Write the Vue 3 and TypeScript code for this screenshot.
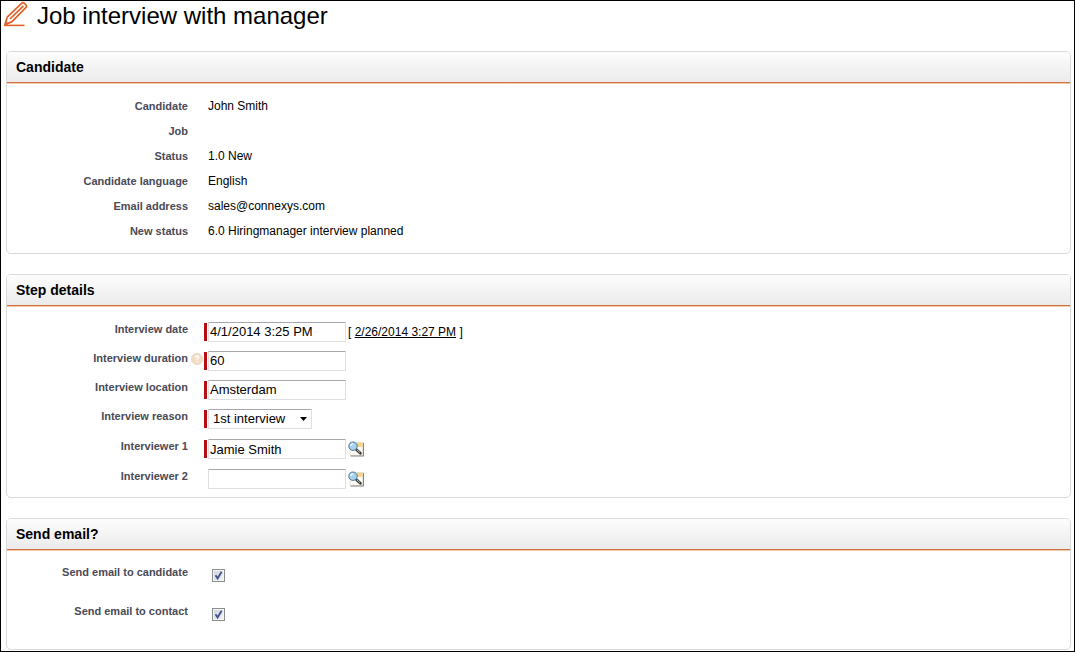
<script setup lang="ts">
import { reactive } from 'vue'

interface Detail {
  label: string
  value: string
}

const details: Detail[] = [
  { label: 'Candidate', value: 'John Smith' },
  { label: 'Job', value: '' },
  { label: 'Status', value: '1.0 New' },
  { label: 'Candidate language', value: 'English' },
  { label: 'Email address', value: 'sales@connexys.com' },
  { label: 'New status', value: '6.0 Hiringmanager interview planned' },
]

const form = reactive({
  date: '4/1/2014 3:25 PM',
  duration: '60',
  location: 'Amsterdam',
  reason: '1st interview',
  mailCandidate: true,
  mailContact: true,
})

const interviewers = reactive([
  { id: 'interviewer-1', label: 'Interviewer 1', name: 'Jamie Smith', required: true },
  { id: 'interviewer-2', label: 'Interviewer 2', name: '', required: false },
])

const now = '2/26/2014 3:27 PM'
</script>

<template>
  <main class="page">
    <header class="title">
      <svg class="pencil" viewBox="0 0 26 26" aria-hidden="true">
        <g fill="none" stroke="#e0622a" stroke-linejoin="round">
          <path d="M3 23.6 L5.2 16.2 L19.8 2.2 Q21 1.2 22.2 2.2 L24 4 Q25 5.2 24 6.4 L10 20.6 Z" stroke-width="1.7" />
          <path d="M8 18 L21.4 4.8" stroke-width="1.7" />
          <path d="M2.5 24.4 H22.5" stroke-width="1.6" />
        </g>
        <path d="M2 25 L3.8 20 L7 22.8 Z" fill="#e0622a" />
      </svg>
      <h1>Job interview with manager</h1>
    </header>

    <section class="panel">
      <h2>Candidate</h2>
      <dl class="body details">
        <div v-for="d in details" :key="d.label" class="row">
          <dt class="label">{{ d.label }}</dt>
          <dd>{{ d.value }}</dd>
        </div>
      </dl>
    </section>

    <section class="panel">
      <h2>Step details</h2>
      <div class="body steps">
        <div class="row">
          <label class="label" for="date">Interview date</label>
          <span class="slot"></span>
          <div class="control">
            <span class="bar required"></span>
            <input id="date" v-model="form.date" class="text" type="text" />
            <span class="now">[ <a href="#" @click.prevent="form.date = now">{{ now }}</a> ]</span>
          </div>
        </div>
        <div class="row">
          <label class="label" for="duration">Interview duration</label>
          <span class="slot">
            <svg class="help" viewBox="0 0 12 12" aria-hidden="true">
              <circle cx="6" cy="6" r="5.5" fill="#f3dcc2" stroke="#e6d6c4" />
              <path d="M4.2 4.7 Q4.3 3 6 3 Q7.8 3.1 7.7 4.5 Q7.6 5.4 6.1 6.1 V7.2 M6.1 8.2 V9.5" fill="none" stroke="#fff" stroke-width="1.3" />
            </svg>
          </span>
          <div class="control">
            <span class="bar required"></span>
            <input id="duration" v-model="form.duration" class="text" type="text" />
          </div>
        </div>
        <div class="row">
          <label class="label" for="location">Interview location</label>
          <span class="slot"></span>
          <div class="control">
            <span class="bar required"></span>
            <input id="location" v-model="form.location" class="text" type="text" />
          </div>
        </div>
        <div class="row tall">
          <label class="label" for="reason">Interview reason</label>
          <span class="slot"></span>
          <div class="control">
            <span class="bar required"></span>
            <span class="pick">
              <select id="reason" v-model="form.reason">
                <option>1st interview</option>
              </select>
              <svg class="arrow" viewBox="0 0 7 4" aria-hidden="true"><path d="M0 0 H7 L3.5 4 Z" /></svg>
            </span>
          </div>
        </div>
        <div v-for="p in interviewers" :key="p.id" class="row tall">
          <label class="label" :for="p.id">{{ p.label }}</label>
          <span class="slot"></span>
          <div class="control">
            <span class="bar" :class="{ required: p.required }"></span>
            <input :id="p.id" v-model="p.name" class="text" type="text" />
            <button class="lookup" type="button" :aria-label="`Look up ${p.label}`">
              <svg viewBox="0 0 16 16" aria-hidden="true">
                <rect x="2" y="1.5" width="13" height="13" fill="#fffdf8" stroke="#d5d0c5" stroke-width=".6" />
                <path d="M2.5 15 H15.5 V2" fill="none" stroke="#85827a" stroke-width="1.2" />
                <rect x="9" y="1.8" width="5.6" height="4" fill="#f8cf83" />
                <path d="M8.3 8.5 L12.4 12.2" stroke="#3a3a3a" stroke-width="2.8" stroke-linecap="round" />
                <path d="M8.8 8.7 L12 11.6" stroke="#c9c8b8" stroke-width="1" />
                <circle cx="5" cy="5.2" r="4.2" fill="#a5d3f0" stroke="#55758e" />
                <path d="M2.8 5 Q3 2.8 5.2 2.6" fill="none" stroke="#effaff" stroke-width="1.4" />
              </svg>
            </button>
          </div>
        </div>
      </div>
    </section>

    <section class="panel">
      <h2>Send email?</h2>
      <div class="body mails">
        <div class="row">
          <label class="label" for="mail-candidate">Send email to candidate</label>
          <span class="check">
            <input id="mail-candidate" v-model="form.mailCandidate" type="checkbox" />
            <svg viewBox="0 0 13 13" aria-hidden="true"><path d="M3.5 6.3 L5.6 9.4 L9.6 2.8" /></svg>
          </span>
        </div>
        <div class="row">
          <label class="label" for="mail-contact">Send email to contact</label>
          <span class="check">
            <input id="mail-contact" v-model="form.mailContact" type="checkbox" />
            <svg viewBox="0 0 13 13" aria-hidden="true"><path d="M3.5 6.3 L5.6 9.4 L9.6 2.8" /></svg>
          </span>
        </div>
      </div>
    </section>
  </main>
</template>

<style>
body {
  margin: 0;
  background: #fff;
}
</style>

<style scoped>
.page {
  box-sizing: border-box;
  min-height: 100vh;
  border: 1px solid #000;
  padding: 0 3px 1px 5px;
  display: flex;
  flex-direction: column;
  gap: 20px;
  background: #fff;
  color: #000;
  font: 12px/16px "Liberation Sans", Arial, sans-serif;
}

.title {
  display: flex;
  align-items: center;
  gap: 9px;
  height: 30px;
  margin-left: -4px;
}

.pencil {
  width: 26px;
  height: 26px;
  margin-bottom: 4px;
}

h1 {
  margin: 0;
  font-size: 24px;
  line-height: 32px;
  font-weight: normal;
}

.panel {
  border: 1px solid #dadada;
  border-radius: 5px;
  overflow: hidden;
}

h2 {
  margin: 0;
  padding: 0 9px;
  font-size: 14px;
  line-height: 30px;
  background: linear-gradient(#fdfdfd, #ebebeb);
  border-bottom: 1px solid #d0713f;
  box-shadow: 0 1px #f5c9a4;
}

.body {
  margin: 1px 0 0;
}

.details {
  padding: 10px 0 9px;
}

.steps {
  padding: 10px 0 3px;
}

.mails {
  padding: 5px 0 15px;
}

.row {
  display: flex;
}

.details .row {
  height: 25px;
  line-height: 25px;
}

.steps .row {
  height: 29px;
}

.steps .row.tall {
  height: 30px;
}

.mails .row {
  height: 39px;
}

.label {
  flex: none;
  width: 181px;
  text-align: right;
  font-size: 11px;
  font-weight: bold;
  color: #4a4a56;
}

.steps .label {
  line-height: 24px;
}

.mails .label {
  line-height: 32px;
}

dd {
  margin: 0 0 0 20px;
}

.slot {
  flex: none;
  display: flex;
  align-items: center;
  justify-content: flex-end;
  width: 16px;
  height: 26px;
}

.help {
  width: 12px;
  height: 12px;
  margin-right: 1px;
}

.control {
  display: flex;
  align-items: center;
}

.bar {
  width: 3px;
  height: 18px;
  margin-right: 1px;
}

.bar.required {
  background: #b80d12;
}

.text,
select {
  box-sizing: border-box;
  height: 20px;
  border: 1px solid #dedfe3;
  border-top-color: #a5a7ad;
  border-radius: 1px;
  background: #fff;
  color: #000;
  font: 13px/16px "Liberation Sans", Arial, sans-serif;
  outline: none;
}

.text {
  width: 138px;
  padding: 0 1px;
}

.now {
  margin-left: 2px;
}

.now a {
  color: #000;
}

.pick {
  display: grid;
  align-items: center;
}

.pick > * {
  grid-area: 1 / 1;
}

select {
  appearance: none;
  width: 104px;
  padding: 0 20px 0 4px;
}

.arrow {
  width: 7px;
  height: 4px;
  justify-self: end;
  margin-right: 5px;
  pointer-events: none;
}

.lookup {
  width: 16px;
  height: 16px;
  margin-left: 2px;
  padding: 0;
  border: 0;
  background: none;
}

.lookup svg {
  display: block;
  width: 16px;
  height: 16px;
}

.check {
  display: grid;
  align-content: center;
  margin-left: 24px;
}

.check > * {
  grid-area: 1 / 1;
}

.check input {
  appearance: none;
  box-sizing: border-box;
  width: 13px;
  height: 13px;
  margin: 0;
  border: 1px solid #8b8d90;
  background: linear-gradient(135deg, #cfd3da, #f6f6f6);
  box-shadow: inset 0 0 0 1px #f4f4f4;
}

.check svg {
  width: 13px;
  height: 13px;
  pointer-events: none;
  visibility: hidden;
}

.check input:checked + svg {
  visibility: visible;
}

.check path {
  fill: none;
  stroke: #41558f;
  stroke-width: 1.9;
}
</style>
